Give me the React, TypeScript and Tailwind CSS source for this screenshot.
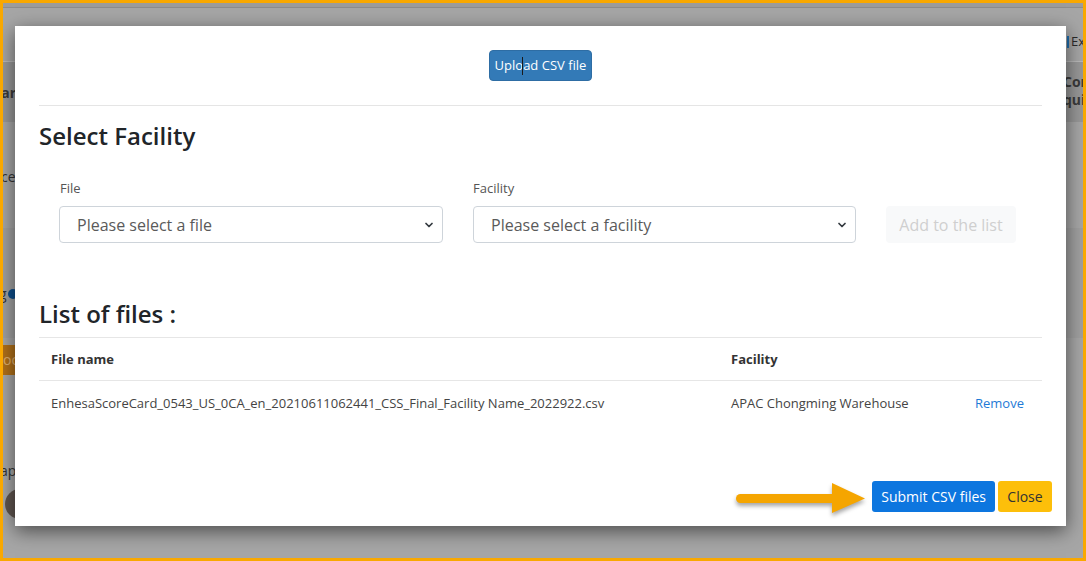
import { ChevronDown } from 'lucide-react';

const FILES = [
  {
    name: 'EnhesaScoreCard_0543_US_0CA_en_20210611062441_CSS_Final_Facility Name_2022922.csv',
    facility: 'APAC Chongming Warehouse',
  },
];

function SelectBox({ placeholder, width }: { placeholder: string; width: string }) {
  return (
    <div className={`relative h-[37px] ${width} rounded-[4px] border border-[#ced4da] bg-white flex items-center pl-[17px]`}>
      <span className="text-[16px] text-[#5a5a5a]">{placeholder}</span>
      <ChevronDown size={12} strokeWidth={3.5} className="absolute right-[7px] top-[12px] text-[#343a40]" />
    </div>
  );
}

export default function App() {
  return (
    <div
      className="relative w-[1086px] h-[561px] overflow-hidden border-[3px] border-[#f9a800] bg-[#a6a6a6]"
      style={{ fontFamily: '"Open Sans", "Noto Sans", sans-serif' }}
    >
      {/* page underneath the backdrop */}
      <div className="h-[5px] bg-[#9c9c9c] border-b border-[#8c8c8c]" />
      <div className="absolute left-0 right-0 top-[59px] h-[60px] bg-[#979797]" />
      <div className="absolute left-0 right-0 top-[58px] h-px bg-[#b8b8b8]" />
      <div className="absolute left-[-6px] top-[79px] text-[14px] font-bold text-[#3a3a3a]">lar</div>
      <div className="absolute left-[-2px] top-[163px] text-[14px] text-[#333]">ce</div>
      <div className="absolute left-0 right-0 top-[225px] h-[110px] bg-[#a0a0a0]" />
      <div className="absolute left-[-4px] top-[280px] text-[14px] text-[#333] flex items-center gap-[1px]">
        g<span className="inline-block w-[10px] h-[10px] rounded-full bg-[#0f4f8c]" />
      </div>
      <div className="absolute left-[-6px] top-[342px] w-[26px] h-[30px] bg-[#b0701a] text-[14px] text-[#e0b070] leading-[30px] pl-[6px]">oo</div>
      <div className="absolute left-[-3px] top-[457px] text-[14px] text-[#333]">ap</div>
      <div className="absolute left-[2px] top-[486px] w-[30px] h-[30px] rounded-full bg-[#5f5550]" />
      <div className="absolute left-[1064px] top-[29px] text-[13px] text-[#2a2a2a] flex items-center gap-[2px]">
        <span className="inline-block w-[2px] h-[12px] bg-[#1f6fb0]" />Ex
      </div>
      <div className="absolute left-[1060px] top-[70px] text-[14px] font-bold text-[#3a3a3a] leading-[18px]">
        Cor<br />qui
      </div>

      {/* modal */}
      <div className="absolute left-[12px] top-[23px] w-[1051px] h-[500px] bg-white shadow-[0_5px_18px_rgba(0,0,0,0.55)] flex flex-col">
        <div className="px-[24px] pt-[24px]">
          <div className="flex justify-center">
            <button className="relative h-[31px] px-[5px] rounded-[4px] border border-[#2e6da4] bg-[#337ab7] text-white text-[13px]">
              Upload CSV file
              <span className="absolute left-[32px] top-[6px] w-px h-[18px] bg-[#1a1a1a]" />
            </button>
          </div>
          <div className="mt-[24px] border-t border-[#e5e5e5]" />

          <h4 className="mt-[15px] text-[24px] leading-[29px] font-semibold text-[#212529]">Select Facility</h4>

          <div className="mt-[29px] pl-[20px] flex items-end">
            <div className="flex flex-col">
              <label className="pl-[1px] text-[13px] leading-[18px] text-[#555]">File</label>
              <div className="mt-[9px]">
                <SelectBox placeholder="Please select a file" width="w-[384px]" />
              </div>
            </div>
            <div className="ml-[30px] flex flex-col">
              <label className="text-[13px] leading-[18px] text-[#555]">Facility</label>
              <div className="mt-[9px]">
                <SelectBox placeholder="Please select a facility" width="w-[383px]" />
              </div>
            </div>
            <button className="ml-[30px] h-[37px] w-[130px] rounded-[4px] bg-[#f8f9fa] text-[16px] text-[#cfcfcf]">
              Add to the list
            </button>
          </div>

          <h4 className="mt-[56px] text-[24px] leading-[29px] font-semibold text-[#212529]">List of files :</h4>

          <div className="mt-[9px] border-t border-[#e6e6e6] grid grid-cols-[680px_244px_1fr] text-[13px] leading-[18px] text-[#444]">
            <div className="h-[43px] flex items-center pl-[12px] font-bold text-[#333] border-b border-[#e6e6e6]">File name</div>
            <div className="h-[43px] flex items-center pl-[12px] font-bold text-[#333] border-b border-[#e6e6e6]">Facility</div>
            <div className="h-[43px] border-b border-[#e6e6e6]" />
            {FILES.map(f => (
              <>
                <div key={f.name} className="h-[43px] flex items-center pl-[12px]">{f.name}</div>
                <div className="h-[43px] flex items-center pl-[12px]">{f.facility}</div>
                <div className="h-[43px] flex items-center pl-[12px] text-[#1f7ad6]">Remove</div>
              </>
            ))}
          </div>
        </div>

        <div className="mt-auto px-[14px] pb-[14px] flex items-end justify-end">
          <svg width="131" height="34" viewBox="0 0 131 34" className="mr-[6px] mb-[-4px] overflow-visible drop-shadow-[0_3px_2px_rgba(0,0,0,0.35)]">
            <rect x="1" y="12" width="100" height="9" rx="4.5" fill="#f5a500" />
            <polygon points="97,1 130,16.5 97,31" fill="#f5a500" />
          </svg>
          <button className="h-[31px] px-[9px] rounded-[3px] bg-[#0d76df] text-white text-[14px] font-medium">
            Submit CSV files
          </button>
          <button className="ml-[3px] h-[31px] w-[54px] rounded-[3px] bg-[#fdbf0a] text-[#333] text-[14px]">
            Close
          </button>
        </div>
      </div>
    </div>
  );
}
